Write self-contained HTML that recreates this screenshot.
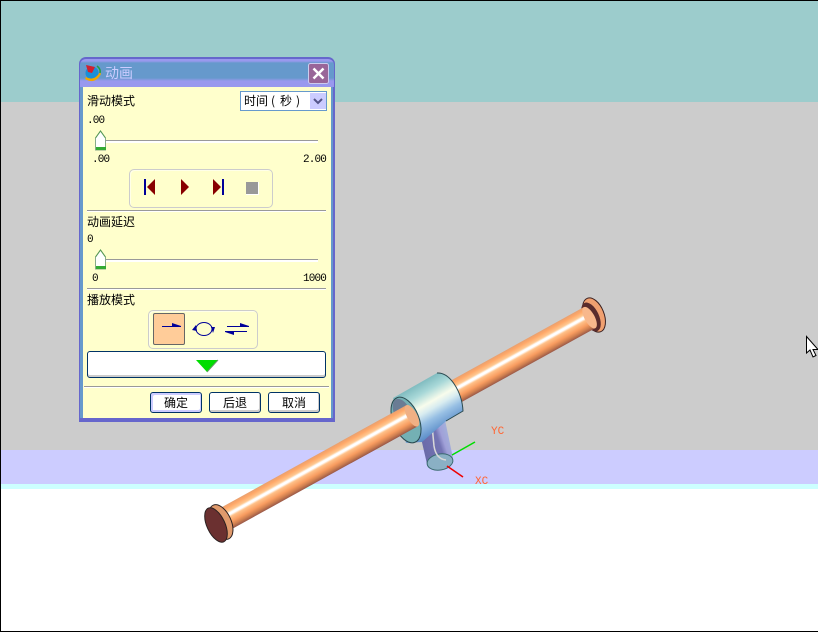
<!DOCTYPE html>
<html lang="zh">
<head>
<meta charset="utf-8">
<title>动画</title>
<style>
html,body{margin:0;padding:0}
body{width:818px;height:632px;position:relative;overflow:hidden;background:#fff;font-family:"Liberation Sans","WenQuanYi Zen Hei","Noto Sans CJK SC",sans-serif}
.a{position:absolute}
.t{position:absolute;font:12px/14px "WenQuanYi Zen Hei","Noto Sans CJK SC",sans-serif;color:#000;white-space:nowrap}
.n{position:absolute;font:11px/14px "Liberation Mono",monospace;letter-spacing:-.85px;color:#000;white-space:nowrap}
.sep{position:absolute;height:1px;background:#999;border-bottom:1px solid #fff}
.group{position:absolute;box-sizing:border-box;border:1px solid #ccc;border-radius:5px;box-shadow:inset 1px 1px 0 #ffffe8}
.btn{position:absolute;box-sizing:border-box;top:392px;width:52px;height:21px;background:#fff;border:1px solid #003366;border-radius:3px;box-shadow:inset -1px -2px 0 #ccc;text-align:center;font:12px/19px "WenQuanYi Zen Hei","Noto Sans CJK SC",sans-serif;color:#000}
svg{position:absolute;left:0;top:0}
</style>
</head>
<body>
<div class="a" style="left:0;top:0;width:818px;height:102px;background:#9ccccc"></div>
<div class="a" style="left:0;top:102px;width:818px;height:348px;background:#cccccc"></div>
<div class="a" style="left:0;top:450px;width:818px;height:34px;background:#ccccff"></div>
<div class="a" style="left:0;top:484px;width:818px;height:5px;background:#ccffff"></div>
<div class="a" style="left:0;top:0;width:1px;height:632px;background:#000"></div>
<div class="a" style="left:0;top:0;width:818px;height:1px;background:#000"></div>
<div class="a" style="left:0;top:631px;width:818px;height:1px;background:#000"></div>

<svg width="818" height="632" viewBox="0 0 818 632">
<defs>
<linearGradient id="rod" gradientUnits="userSpaceOnUse" x1="364.2" y1="428.5" x2="375.8" y2="449.5">
<stop offset="0" stop-color="#e8a070"/><stop offset=".12" stop-color="#ffa868"/><stop offset=".28" stop-color="#ffc890"/><stop offset=".36" stop-color="#ffffff"/><stop offset=".43" stop-color="#ffffff"/><stop offset=".52" stop-color="#ffc088"/><stop offset=".72" stop-color="#f89c60"/><stop offset=".86" stop-color="#d08050"/><stop offset="1" stop-color="#985848"/>
</linearGradient>
<linearGradient id="body" gradientUnits="userSpaceOnUse" x1="416" y1="385" x2="442" y2="430">
<stop offset="0" stop-color="#80bcc0"/><stop offset=".2" stop-color="#a8d8d8"/><stop offset=".42" stop-color="#f8fcec"/><stop offset=".55" stop-color="#d8ecf0"/><stop offset=".72" stop-color="#98c0e4"/><stop offset="1" stop-color="#5a8cc8"/>
</linearGradient>
<linearGradient id="stem" gradientUnits="userSpaceOnUse" x1="424" y1="452" x2="454" y2="442">
<stop offset="0" stop-color="#6a6aa8"/><stop offset=".55" stop-color="#7474b4"/><stop offset=".7" stop-color="#a0a0d8"/><stop offset="1" stop-color="#a4b4dc"/>
</linearGradient>
</defs>

<!-- far end cap -->
<ellipse cx="594" cy="315" rx="10" ry="18" transform="rotate(-22 594 315)" fill="#f0a070" stroke="#3a2020" stroke-width="1"/>
<ellipse cx="591" cy="317" rx="8" ry="15.500" transform="rotate(-25 591 317)" fill="#5a2c2c"/>
<!-- rod -->
<polygon points="213.800,511.600 583.800,307.100 595.400,328.100 225.400,532.600" fill="url(#rod)"/>
<ellipse cx="589.600" cy="317.600" rx="5" ry="12" transform="rotate(-29 589.600 317.600)" fill="#f8b88c"/>
<!-- near end cap -->
<ellipse cx="221" cy="522" rx="10" ry="18.500" transform="rotate(-25 221 522)" fill="#e09a6c" stroke="#2a2020" stroke-width="1"/>
<ellipse cx="216" cy="525" rx="9" ry="18.500" transform="rotate(-25 216 525)" fill="#6b3030" stroke="#2a2020" stroke-width="1"/>

<!-- stem -->
<polygon points="421,438 445,420 453,458 427,464" fill="url(#stem)"/>
<ellipse cx="440" cy="462" rx="13" ry="8" transform="rotate(-10 440 462)" fill="#8ab0c4" stroke="#3a6a70" stroke-width="1"/>
<path d="M432 425 L434 446 Q436 459 446 460" fill="none" stroke="#d8d8d8" stroke-width="1.500"/>

<!-- collar -->
<path d="M393 398 L437 373 C450 372 462 392 463 411 L445 422 L422 442 L406 443 Z" fill="url(#body)"/>
<path d="M437 373 C450 372 462 392 463 411 L446 421" fill="none" stroke="#2a4a50" stroke-width="1"/>
<ellipse cx="406" cy="420" rx="13" ry="24" transform="rotate(-22 406 420)" fill="#74b0b4" stroke="#2a4a50" stroke-width="1"/>
<ellipse cx="402" cy="412" rx="8" ry="14" transform="rotate(-25 402 412)" fill="#6a7c94"/>
<!-- near rod segment over the hole -->
<polygon points="339.200,442.300 406.200,405.300 417.800,426.300 350.800,463.300" fill="url(#rod)"/>
<ellipse cx="412" cy="415.800" rx="5" ry="12" transform="rotate(-29 412 415.800)" fill="#f0b084"/>

<!-- axes -->
<line x1="452" y1="455" x2="475" y2="442" stroke="#00dd00" stroke-width="1.500"/>
<line x1="447" y1="466" x2="463" y2="477" stroke="#ee0000" stroke-width="1.500"/>
<text x="491" y="434" font-family="Liberation Mono,monospace" font-size="11" fill="#ff6633">YC</text>
<text x="475" y="484" font-family="Liberation Mono,monospace" font-size="11" fill="#ff6633">XC</text>

<!-- cursor -->
<path d="M806.500 336.500 L806.500 353 L810 350 L813 357 L816 355.500 L813 349.500 L818 349.500 Z" fill="#fff" stroke="#000" stroke-width="1"/>
</svg>

<!-- dialog -->
<div class="a" style="left:79px;top:57px;width:256px;height:365px;background:#6666cc;border-radius:7px 7px 0 0"></div>
<div class="a" style="left:80px;top:59px;width:254px;height:28px;border-radius:6px 6px 0 0;background:linear-gradient(#9999ee 0,#9999ee 2px,#6699cc 4px,#6699cc 19px,#9999ee 22px,#9999ee 28px)"></div>
<div class="a" style="left:80px;top:87px;width:3px;height:331px;background:#6699cc"></div>
<div class="a" style="left:331px;top:87px;width:2px;height:331px;background:#6699cc"></div>
<div class="a" style="left:83px;top:87px;width:248px;height:331px;background:#ffffcc"></div>

<svg width="818" height="632" viewBox="0 0 818 632">
<!-- app icon -->
<circle cx="92" cy="73" r="6.500" fill="#1a8fd8"/>
<path d="M86 77 Q94 82 100 72 L101 74 Q95 85 85 79 Z" fill="#f0a800"/>
<polygon points="86,65 95,67 92,73 88,72" fill="#d02030"/>
<path d="M97 66 Q101 69 100 73" fill="none" stroke="#20a040" stroke-width="1.500"/>
<!-- close -->
<rect x="308.500" y="63.500" width="20" height="20" rx="2" fill="#996699" stroke="#ccccee"/>
<path d="M313.500 68.500 L323.500 78.500 M323.500 68.500 L313.500 78.500" stroke="#fff" stroke-width="2.500"/>
</svg>

<div class="t" style="left:105px;top:65px;font-size:14px;line-height:16px;color:#ccccff">动画</div>

<div class="t" style="left:87px;top:94px">滑动模式</div>
<div class="a" style="left:240px;top:91px;width:87px;height:20px;box-sizing:border-box;background:#fff;border:1px solid #6699cc"></div>
<div class="t" style="left:244px;top:94px">时间</div>
<div class="t" style="left:271px;top:94px">(</div>
<div class="t" style="left:280px;top:94px">秒</div>
<div class="t" style="left:296px;top:94px">)</div>
<div class="a" style="left:310px;top:93px;width:16px;height:16px;background:#ccccff"></div>
<svg width="818" height="632" viewBox="0 0 818 632">
<path d="M314 99 L318 103 L322 99" fill="none" stroke="#555588" stroke-width="2"/>

<!-- slider tracks -->
<rect x="106" y="140" width="212" height="1" fill="#999"/>
<rect x="106" y="141" width="212" height="2" fill="#fff"/>
<rect x="106" y="259" width="212" height="1" fill="#999"/>
<rect x="106" y="260" width="212" height="2" fill="#fff"/>

<!-- thumbs -->
<path d="M95.500 138 L100.500 131 L105.500 138 L105.500 150 L95.500 150 Z" fill="#fff" stroke="#88aa88"/>
<rect x="96" y="147" width="10" height="3" fill="#33aa33"/>
<path d="M95.500 138 L100.500 131 L105.500 138" fill="none" stroke="#559955"/>
<g transform="translate(0 119)">
<path d="M95.500 138 L100.500 131 L105.500 138 L105.500 150 L95.500 150 Z" fill="#fff" stroke="#88aa88"/>
<rect x="96" y="147" width="10" height="3" fill="#33aa33"/>
<path d="M95.500 138 L100.500 131 L105.500 138" fill="none" stroke="#559955"/>
</g>

<!-- player icons -->
<rect x="144" y="179" width="2" height="16" fill="#000099"/>
<polygon points="147,187 155,179 155,195" fill="#880000"/>
<polygon points="181,179 189,187 181,195" fill="#880000"/>
<polygon points="213,179 221,187 213,195" fill="#880000"/>
<rect x="222" y="179" width="2" height="16" fill="#000099"/>
<rect x="246" y="182" width="12" height="12" fill="#999"/>
<path d="M258.500 182 V194.500 H246" fill="none" stroke="#fff"/>
</svg>

<div class="n" style="left:87px;top:114px">.00</div>
<div class="n" style="left:92px;top:153px">.00</div>
<div class="n" style="right:492px;top:153px">2.00</div>
<div class="group" style="left:129px;top:169px;width:144px;height:39px"></div>
<div class="sep" style="left:87px;top:210px;width:239px"></div>

<div class="t" style="left:87px;top:215px">动画延迟</div>
<div class="n" style="left:87px;top:233px">0</div>
<div class="n" style="left:92px;top:272px">0</div>
<div class="n" style="right:492px;top:272px">1000</div>
<div class="sep" style="left:87px;top:288px;width:239px"></div>

<div class="t" style="left:87px;top:293px">播放模式</div>
<div class="group" style="left:148px;top:310px;width:110px;height:39px"></div>
<div class="a" style="left:153px;top:313px;width:32px;height:32px;box-sizing:border-box;background:#ffcc99;border:1px solid #666;border-radius:2px"></div>

<div class="a" style="left:87px;top:351px;width:239px;height:27px;box-sizing:border-box;background:#fff;border:1px solid #003366;border-radius:3px;box-shadow:inset 0 -2px 0 #ccc"></div>
<svg width="818" height="632" viewBox="0 0 818 632">
<!-- mode icons -->
<path d="M162 326.500 H181" stroke="#000099" fill="none"/>
<polygon points="172,323 181,326 172,327" fill="#000099"/>
<ellipse cx="204" cy="329" rx="8" ry="6.500" fill="none" stroke="#000099"/>
<polygon points="192,330 196,325 197,331" fill="#000099"/>
<polygon points="215,327 213,333 211,327" fill="#000099"/>
<path d="M227 326.500 H249 M225 331.500 H247" stroke="#000099" fill="none"/>
<polygon points="240,323 249,326 240,327" fill="#000099"/>
<polygon points="234,331 225,332 234,335" fill="#000099"/>
<polygon points="196,360 218,360 207,372" fill="#00dd00"/>
<path d="M218 360 L207 372" stroke="#669966" fill="none"/>
</svg>

<div class="sep" style="left:84px;top:386px;width:245px"></div>
<div class="btn" style="left:150px;box-shadow:inset -1px -2px 0 #ccccff,inset 2px 2px 0 #ccccff">确定</div>
<div class="btn" style="left:209px">后退</div>
<div class="btn" style="left:268px">取消</div>
</body>
</html>
